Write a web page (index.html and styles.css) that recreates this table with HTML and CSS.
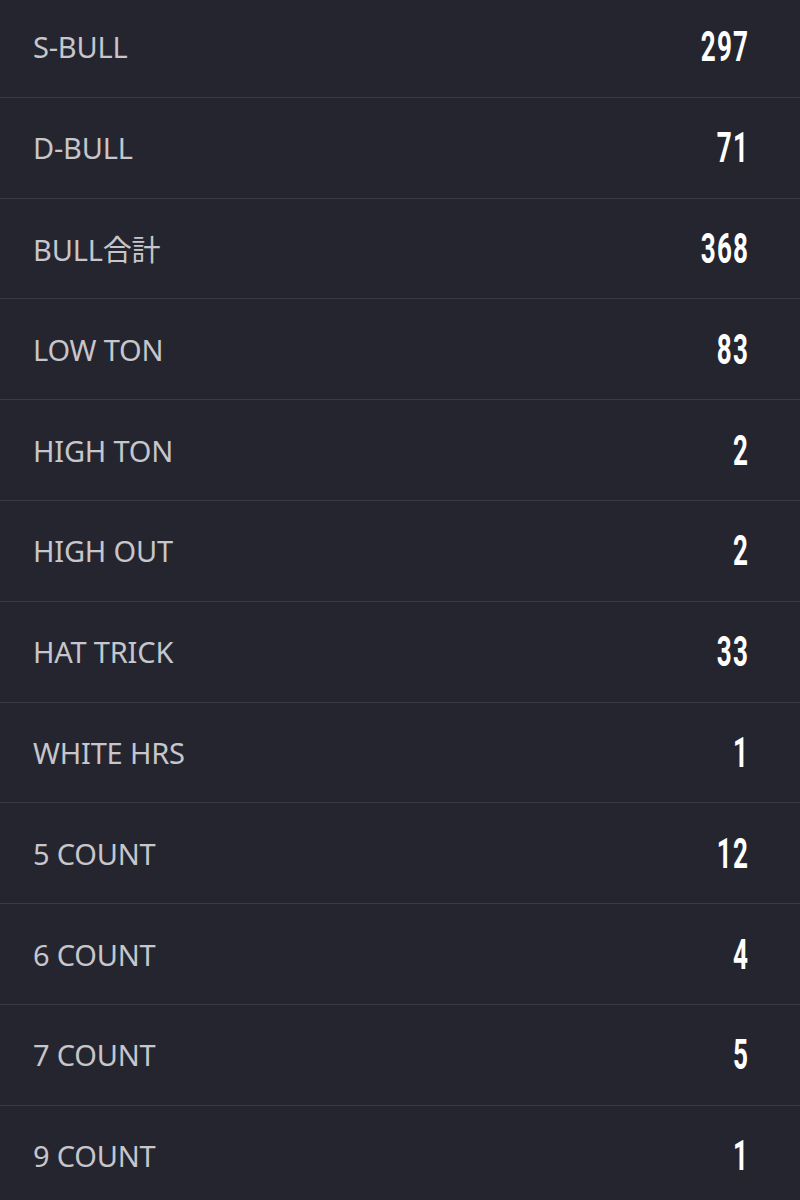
FILE: index.html
```html
<!DOCTYPE html>
<html>
<head>
  <title>Stats</title>
  <link rel="stylesheet" href="styles.css">
</head>
<body>
  <ul class="stats">
    <li class="row"><span class="label">S-BULL</span><span class="num">297</span></li>
    <li class="row"><span class="label">D-BULL</span><span class="num">71</span></li>
    <li class="row"><span class="label">BULL合計</span><span class="num">368</span></li>
    <li class="row"><span class="label">LOW TON</span><span class="num">83</span></li>
    <li class="row"><span class="label">HIGH TON</span><span class="num">2</span></li>
    <li class="row"><span class="label">HIGH OUT</span><span class="num">2</span></li>
    <li class="row"><span class="label">HAT TRICK</span><span class="num">33</span></li>
    <li class="row"><span class="label">WHITE HRS</span><span class="num">1</span></li>
    <li class="row"><span class="label">5 COUNT</span><span class="num">12</span></li>
    <li class="row"><span class="label">6 COUNT</span><span class="num">4</span></li>
    <li class="row"><span class="label">7 COUNT</span><span class="num">5</span></li>
    <li class="row"><span class="label">9 COUNT</span><span class="num">1</span></li>
  </ul>
</body>
</html>
```

FILE: styles.css
```css
html, body {
  margin: 0;
  padding: 0;
  background: #25252f;
}

.stats {
  list-style: none;
  margin: -3px 0 0 0;
  padding: 0;
}

.row {
  display: flex;
  justify-content: space-between;
  align-items: center;
  height: 100.8px;
  box-sizing: border-box;
  border-bottom: 1px solid #3a3a44;
  padding: 0 51px 0 33px;
}

.label {
  font-family: "Noto Sans", "Noto Sans CJK JP", sans-serif;
  font-size: 29px;
  letter-spacing: -0.2px;
  color: #c6c6cb;
}

.num {
  display: inline-block;
  font-family: "Roboto", sans-serif;
  font-weight: 700;
  font-size: 42px;
  color: #ffffff;
  letter-spacing: 2px;
  transform: scaleX(0.62);
  transform-origin: right center;
}
```
